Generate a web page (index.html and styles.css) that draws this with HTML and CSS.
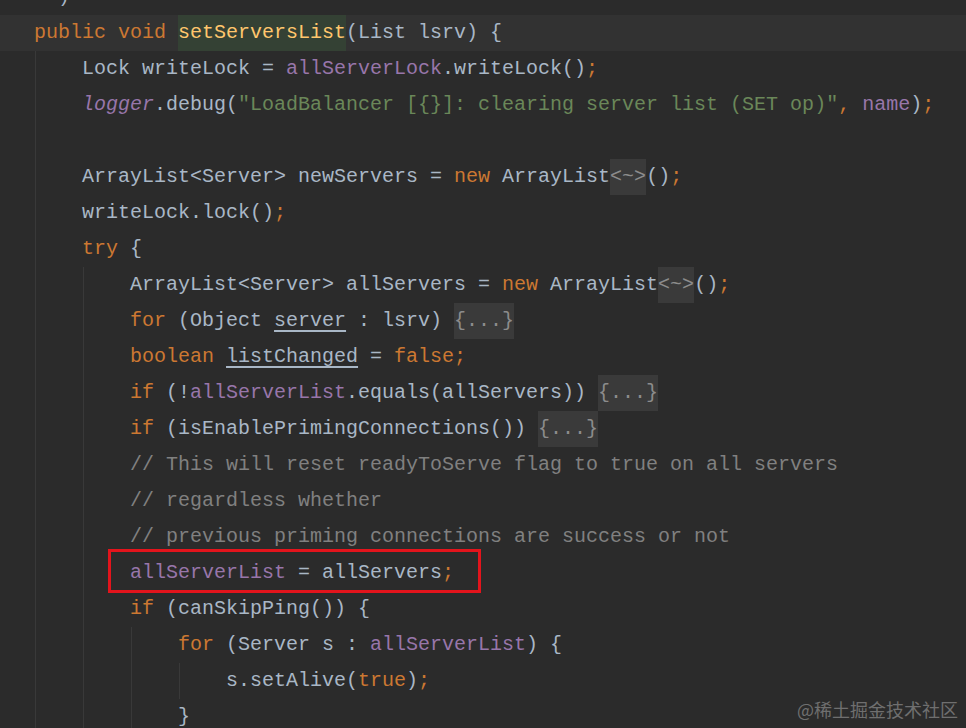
FILE: index.html
```html
<!DOCTYPE html>
<html lang="en">
<head>
  <meta charset="UTF-8">
  <title>setServersList</title>
  <link rel="stylesheet" href="styles.css">
</head>
<body>
  <div class="editor">
    <div class="code">
      <div class="line top">  )</div>
      <div class="line current"><span class="kw">public void </span><span class="decl">setServersList</span>(List lsrv) {</div>
      <div class="block">
        <div class="line">Lock writeLock = <span class="field">allServerLock</span>.writeLock()<span class="kw">;</span></div>
        <div class="line"><span class="static">logger</span>.debug(<span class="str">"LoadBalancer [{}]: clearing server list (SET op)"</span><span class="kw">, </span><span class="field">name</span>)<span class="kw">;</span></div>
        <div class="line"></div>
        <div class="line">ArrayList&lt;Server&gt; newServers = <span class="kw">new </span>ArrayList<span class="fold">&lt;~&gt;</span>()<span class="kw">;</span></div>
        <div class="line">writeLock.lock()<span class="kw">;</span></div>
        <div class="line"><span class="kw">try </span>{</div>
        <div class="block">
          <div class="line">ArrayList&lt;Server&gt; allServers = <span class="kw">new </span>ArrayList<span class="fold">&lt;~&gt;</span>()<span class="kw">;</span></div>
          <div class="line"><span class="kw">for </span>(Object <span class="reassigned">server</span> : lsrv) <span class="fold">{...}</span></div>
          <div class="line"><span class="kw">boolean </span><span class="reassigned">listChanged</span> = <span class="kw">false;</span></div>
          <div class="line"><span class="kw">if </span>(!<span class="field">allServerList</span>.equals(allServers)) <span class="fold">{...}</span></div>
          <div class="line"><span class="kw">if </span>(isEnablePrimingConnections()) <span class="fold">{...}</span></div>
          <div class="line comment">// This will reset readyToServe flag to true on all servers</div>
          <div class="line comment">// regardless whether</div>
          <div class="line comment">// previous priming connections are success or not</div>
          <div class="line marked"><span class="field">allServerList</span> = allServers<span class="kw">;</span><span class="box"></span></div>
          <div class="line"><span class="kw">if </span>(canSkipPing()) {</div>
          <div class="block">
            <div class="line"><span class="kw">for </span>(Server s : <span class="field">allServerList</span>) {</div>
            <div class="block">
              <div class="line">s.setAlive(<span class="kw">true</span>)<span class="kw">;</span></div>
            </div>
            <div class="line">}</div>
          </div>
        </div>
      </div>
    </div>
    <div class="watermark">@稀土掘金技术社区</div>
  </div>
</body>
</html>
```

FILE: styles.css
```css
body {
  margin: 0;
  background: #2b2b2b;
  overflow: hidden;
}
.editor {
  position: relative;
  width: 966px;
  height: 728px;
  overflow: hidden;
}
.code {
  margin-top: -21px;
  font-family: "Liberation Mono", monospace;
  font-size: 20px;
  color: #a9b7c6;
}
.line {
  height: 36px;
  line-height: 36px;
  white-space: pre;
  padding-left: 46px;
}
.code > .line {
  padding-left: 34px;
}
.line.current {
  background: #323232;
}
.block {
  margin-left: 47px;
  border-left: 1px solid #393939;
}
.code > .block {
  margin-left: 35px;
}
.kw {
  color: #cc7832;
}
.decl {
  color: #ffc66d;
  background: #344134;
  display: inline-block;
  vertical-align: top;
}
.field {
  color: #9876aa;
}
.static {
  color: #9876aa;
  font-style: italic;
}
.str {
  color: #6a8759;
}
.comment {
  color: #808080;
}
.reassigned {
  text-decoration: underline;
  text-underline-offset: 4px;
}
.fold {
  display: inline-block;
  vertical-align: top;
  color: #8c8c8c;
  background: #3a3a3a;
}
.marked {
  position: relative;
}
.box {
  position: absolute;
  left: 24px;
  top: -6px;
  width: 367px;
  height: 38px;
  border: 3px solid #e3141c;
}
.watermark {
  position: absolute;
  right: 8px;
  bottom: 6px;
  font-family: "Noto Sans CJK SC", sans-serif;
  font-size: 18px;
  color: #6f6f6f;
}
```
